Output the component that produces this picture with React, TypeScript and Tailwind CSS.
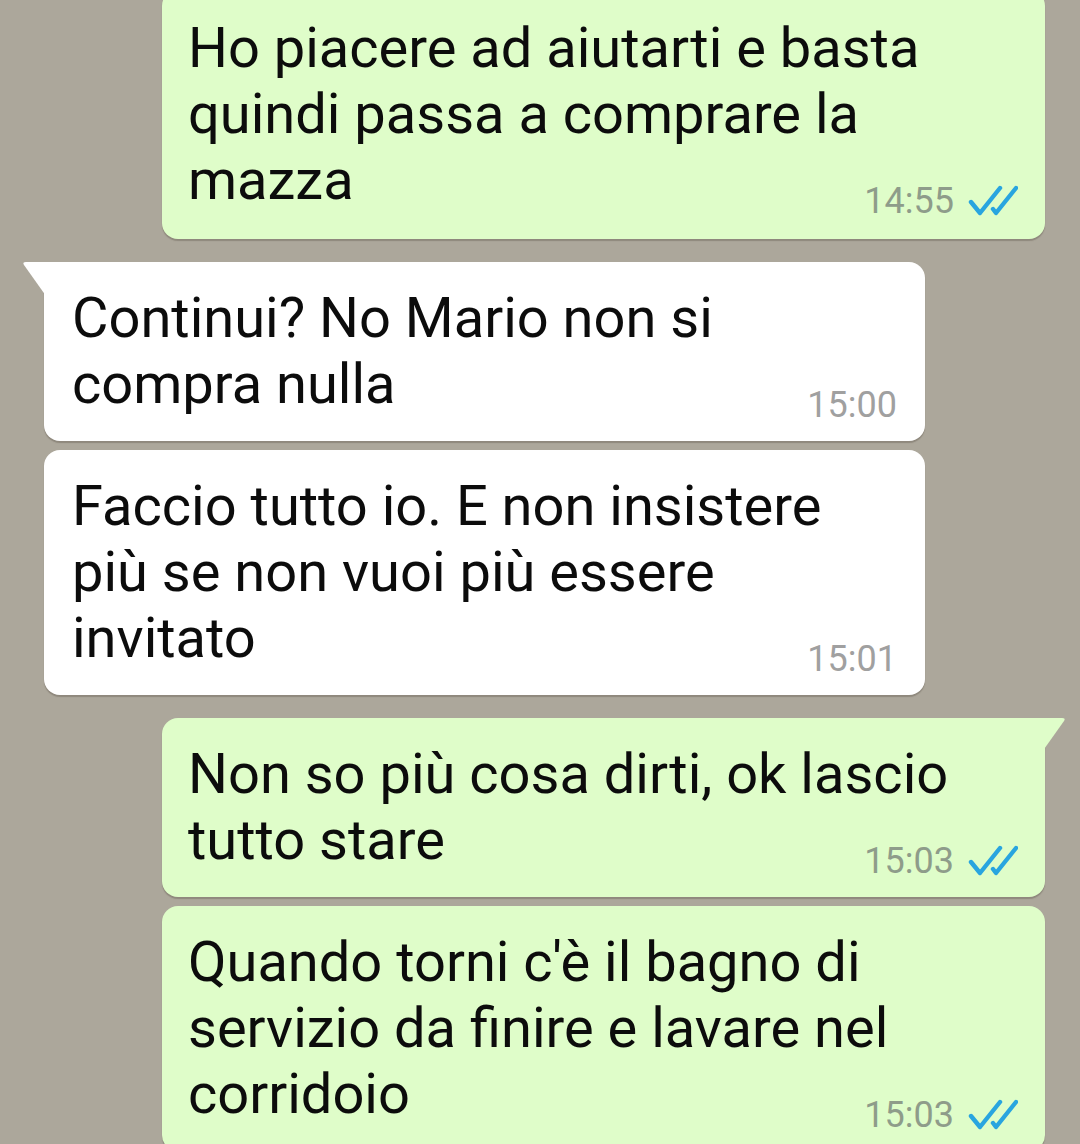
import React from "react";

type Msg = {
  out: boolean;
  lines: string[];
  time: string;
  tail?: boolean;
};

const messages: Msg[] = [
  {
    out: true,
    lines: ["Ho piacere ad aiutarti e basta", "quindi passa a comprare la", "mazza"],
    time: "14:55",
  },
  {
    out: false,
    tail: true,
    lines: ["Continui? No Mario non si", "compra nulla"],
    time: "15:00",
  },
  {
    out: false,
    lines: ["Faccio tutto io. E non insistere", "più se non vuoi più essere", "invitato"],
    time: "15:01",
  },
  {
    out: true,
    tail: true,
    lines: ["Non so più cosa dirti, ok lascio", "tutto stare"],
    time: "15:03",
  },
  {
    out: true,
    lines: ["Quando torni c'è il bagno di", "servizio da finire e lavare nel", "corridoio"],
    time: "15:03",
  },
];

// double blue tick shown on read outgoing messages
const Ticks = () => (
  <svg width="50" height="32" viewBox="0 0 50 32" fill="none" className="ml-[14px]">
    <path d="M3 17 L12 28 L32 3" stroke="#29a5df" strokeWidth="4.4" strokeLinecap="round" strokeLinejoin="round" />
    <path d="M25 24 L28 28 L48 3" stroke="#29a5df" strokeWidth="4.4" strokeLinecap="round" strokeLinejoin="round" />
  </svg>
);

const Bubble = ({ msg, first }: { msg: Msg; first: boolean }) => {
  const bg = msg.out ? "bg-[#dffdc9]" : "bg-white";
  return (
    <div
      className={`relative rounded-[16px] shadow-[0_2px_1px_rgba(90,80,70,0.35)] ${bg} ${
        msg.out ? "ml-[162px] w-[883px] pl-[26px] pr-[27px]" : "ml-[44px] w-[881px] pl-[28px] pr-[28px]"
      } ${first ? "pt-[25px] pb-[26px]" : "pt-[23px] pb-[24px]"} ${
        msg.tail && !msg.out ? "rounded-tl-none" : ""
      } ${msg.tail && msg.out ? "rounded-tr-none" : ""}`}
    >
      {msg.tail && !msg.out && (
        <svg width="24" height="34" viewBox="0 0 24 34" className="absolute left-[-22px] top-0">
          <path d="M24 0 L4 0 Q0 0 2 3 L24 34 Z" fill="#ffffff" />
        </svg>
      )}
      {msg.tail && msg.out && (
        <svg width="24" height="34" viewBox="0 0 24 34" className="absolute right-[-21px] top-0">
          <path d="M0 0 L20 0 Q24 0 22 3 L0 34 Z" fill="#dffdc9" />
        </svg>
      )}
      {msg.lines.map((line, i) => {
        const last = i === msg.lines.length - 1;
        if (!last) {
          return (
            <div key={i} className="text-[56px] leading-[66px] text-[#0c0c0c] whitespace-nowrap">
              {line}
            </div>
          );
        }
        return (
          <div key={i} className="flex items-end justify-between">
            <div className="text-[56px] leading-[66px] text-[#0c0c0c] whitespace-nowrap">{line}</div>
            <div className="flex items-center translate-y-[6px]">
              <span
                className={`text-[36px] leading-[36px] ${msg.out ? "text-[#8e9c8a]" : "text-[#a0a0a0]"}`}
              >
                {msg.time}
              </span>
              {msg.out && <Ticks />}
            </div>
          </div>
        );
      })}
    </div>
  );
};

export default function App() {
  return (
    <div
      className="w-[1080px] h-[1144px] overflow-hidden bg-[#aca79b]"
      style={{ fontFamily: "Roboto, 'Noto Sans', sans-serif" }}
    >
      <div className="flex flex-col mt-[-10px]">
        {messages.map((m, i) => {
          const gap = i === 0 ? "" : messages[i - 1].out !== m.out ? "mt-[23px]" : "mt-[9px]";
          return (
            <div key={i} className={gap}>
              <Bubble msg={m} first={i === 0} />
            </div>
          );
        })}
      </div>
    </div>
  );
}
